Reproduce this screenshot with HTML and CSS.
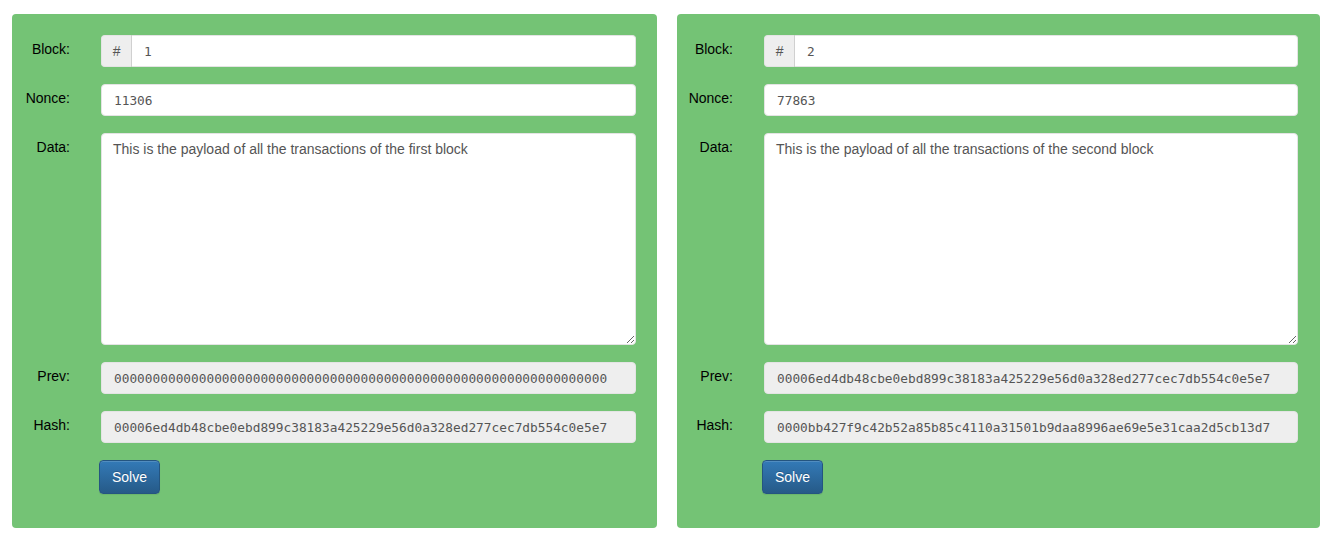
FILE: index.html
```html
<!DOCTYPE html>
<html>
    <head>
        <title>Blockchain</title>
        <link rel="stylesheet" href="styles.css">
    </head>
    <body>
        <div class="chain">
            <div class="block">
                <div class="row">
                    <label>Block:</label>
                    <div class="input-group">
                        <span class="addon">#</span>
                        <input class="field mono" value="1">
                    </div>
                </div>
                <div class="row">
                    <label>Nonce:</label>
                    <input class="field mono" value="11306">
                </div>
                <div class="row">
                    <label>Data:</label>
                    <textarea class="field data">This is the payload of all the transactions of the first block</textarea>
                </div>
                <div class="row">
                    <label>Prev:</label>
                    <input class="field mono" disabled value="0000000000000000000000000000000000000000000000000000000000000000">
                </div>
                <div class="row">
                    <label>Hash:</label>
                    <input class="field mono" disabled value="00006ed4db48cbe0ebd899c38183a425229e56d0a328ed277cec7db554c0e5e7">
                </div>
                <div class="row">
                    <span></span>
                    <div><button class="btn">Solve</button></div>
                </div>
            </div>
            <div class="block second">
                <div class="row">
                    <label>Block:</label>
                    <div class="input-group">
                        <span class="addon">#</span>
                        <input class="field mono" value="2">
                    </div>
                </div>
                <div class="row">
                    <label>Nonce:</label>
                    <input class="field mono" value="77863">
                </div>
                <div class="row">
                    <label>Data:</label>
                    <textarea class="field data">This is the payload of all the transactions of the second block</textarea>
                </div>
                <div class="row">
                    <label>Prev:</label>
                    <input class="field mono" disabled value="00006ed4db48cbe0ebd899c38183a425229e56d0a328ed277cec7db554c0e5e7">
                </div>
                <div class="row">
                    <label>Hash:</label>
                    <input class="field mono" disabled value="0000bb427f9c42b52a85b85c4110a31501b9daa8996ae69e5e31caa2d5cb13d7">
                </div>
                <div class="row">
                    <span></span>
                    <div><button class="btn">Solve</button></div>
                </div>
            </div>
        </div>
    </body>
</html>
```
FILE: styles.css
```css
body {
    margin: 0;
    font-family: 'Liberation Sans', Arial, sans-serif;
    font-size: 14px;
    color: #000;
    background-color: #fff;
}

.chain {
    display: grid;
    grid-template-columns: 645px 643px;
    gap: 20px;
    padding: 14px 0 0 12px;
}

.block {
    background-color: #74c375;
    border-radius: 4px;
    padding: 21px 21px 34px 0;
    display: flex;
    flex-direction: column;
    gap: 17px;
}
.block.second {
    padding-right: 22px;
}
.block.second .row {
    grid-template-columns: 56px 1fr;
}

.row {
    display: grid;
    grid-template-columns: 58px 1fr;
    column-gap: 31px;
}
.row > label {
    text-align: right;
    padding-top: 4px;
    line-height: 20px;
}

.field {
    box-sizing: border-box;
    width: 100%;
    height: 32px;
    padding: 6px 12px;
    border: 1px solid #e4e4e4;
    border-radius: 4px;
    background-color: #fff;
    color: #555;
    font-family: 'Liberation Sans', Arial, sans-serif;
    font-size: 14px;
    outline: none;
}
.field:disabled {
    background-color: #eee;
    color: #555;
    -webkit-text-fill-color: #555;
    opacity: 1;
}
.mono {
    font-family: 'DejaVu Sans Mono', monospace;
    font-size: 12.8px;
}
.data {
    height: 212px;
    resize: vertical;
    line-height: 20px;
    padding: 5px 11px;
}

.input-group {
    display: flex;
}
.input-group > .addon {
    box-sizing: border-box;
    width: 33px;
    height: 32px;
    line-height: 30px;
    text-align: center;
    background-color: #eee;
    color: #555;
    border: 1px solid #e4e4e4;
    border-right: 1px solid #d0d0d0;
    border-radius: 4px 0 0 4px;
}
.input-group > .field {
    border-left: none;
    border-radius: 0 4px 4px 0;
}

.btn {
    margin-left: -2px;
    width: 61px;
    height: 34px;
    color: #fff;
    font-family: 'Liberation Sans', Arial, sans-serif;
    font-size: 14px;
    border: 1px solid #245580;
    border-radius: 4px;
    background-image: linear-gradient(to bottom, #337ab7 0, #265a88 100%);
    box-shadow: inset 0 1px 0 rgba(255,255,255,.15), 0 1px 1px rgba(0,0,0,.075);
    text-shadow: 0 -1px 0 rgba(0,0,0,.2);
}
```
